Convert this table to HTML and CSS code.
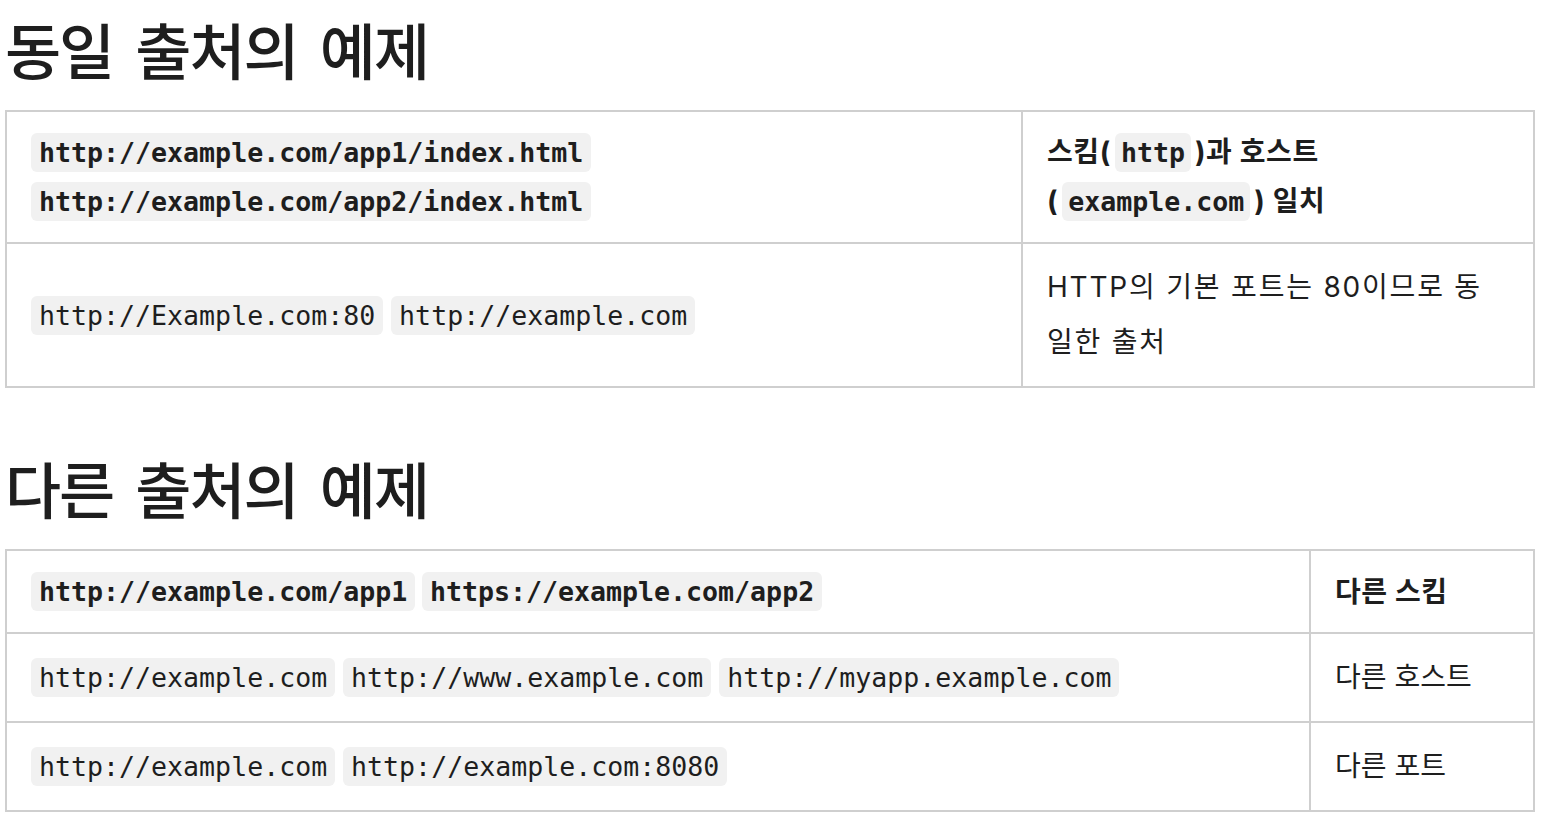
FILE: index.html
```html
<!DOCTYPE html>
<html lang="ko">
<head>
<meta charset="utf-8">
<link rel="stylesheet" href="styles.css">
</head>
<body>
<main class="page">
  <h2 class="title">동일 출처의 예제</h2>
  <table class="tbl tbl-same">
    <thead>
      <tr>
        <th class="c-urls"><code>http://example.com/app1/index.html</code><br><code>http://example.com/app2/index.html</code></th>
        <th class="c-desc">스킴(<code>http</code>)과 호스트 (<code>example.com</code>) 일치</th>
      </tr>
    </thead>
    <tbody>
      <tr>
        <td class="c-urls"><code>http://Example.com:80</code> <code>http://example.com</code></td>
        <td class="c-desc c-note">HTTP의 기본 포트는 80이므로 동일한 출처</td>
      </tr>
    </tbody>
  </table>

  <h2 class="title">다른 출처의 예제</h2>
  <table class="tbl tbl-diff">
    <thead>
      <tr>
        <th class="c-urls"><code>http://example.com/app1</code> <code>https://example.com/app2</code></th>
        <th class="c-desc">다른 스킴</th>
      </tr>
    </thead>
    <tbody>
      <tr>
        <td class="c-urls"><code>http://example.com</code> <code>http://www.example.com</code> <code>http://myapp.example.com</code></td>
        <td class="c-desc">다른 호스트</td>
      </tr>
      <tr>
        <td class="c-urls"><code>http://example.com</code> <code>http://example.com:8080</code></td>
        <td class="c-desc">다른 포트</td>
      </tr>
    </tbody>
  </table>
</main>
</body>
</html>
```

FILE: styles.css
```css
* { box-sizing: border-box; }
html, body { margin: 0; padding: 0; background: #fff; }
body {
  font-family: Inter, "Noto Sans CJK KR", sans-serif;
  font-size: 28px;
  color: #1e1e1e;
}
.page {
  padding: 0 7px 0 5px;
}
.title {
  font-family: "Noto Sans CJK KR", sans-serif;
  font-size: 61px;
  font-weight: 500;
  line-height: 80px;
  letter-spacing: -2px;
  word-spacing: 7px;
  margin: 9px 0 21px 0;
  color: #1e1e1e;
}
.tbl ~ .title {
  margin-top: 60px;
}
.tbl {
  width: 1530px;
  border-collapse: collapse;
  table-layout: fixed;
}
.tbl th, .tbl td {
  border: 2px solid #cfcfcf;
  padding: 16px 24px;
  text-align: left;
  vertical-align: middle;
}
.tbl th {
  font-weight: 700;
  line-height: 48px;
}
.tbl td {
  font-weight: 400;
  line-height: 55px;
}
.tbl-same .c-urls { width: 1016px; }
.tbl-diff .c-urls { width: 1304px; }
.c-note {
  letter-spacing: 1.8px;
}
th.c-desc {
  letter-spacing: 0.6px;
}
code {
  font-family: "DejaVu Sans Mono", monospace;
  font-size: 26.6px;
  letter-spacing: 0;
  background: #f1f1f1;
  border-radius: 6px;
  padding: 4px 8px;
}
th.c-desc code {
  padding: 4px 6px;
  margin: 0 4px;
}
```
